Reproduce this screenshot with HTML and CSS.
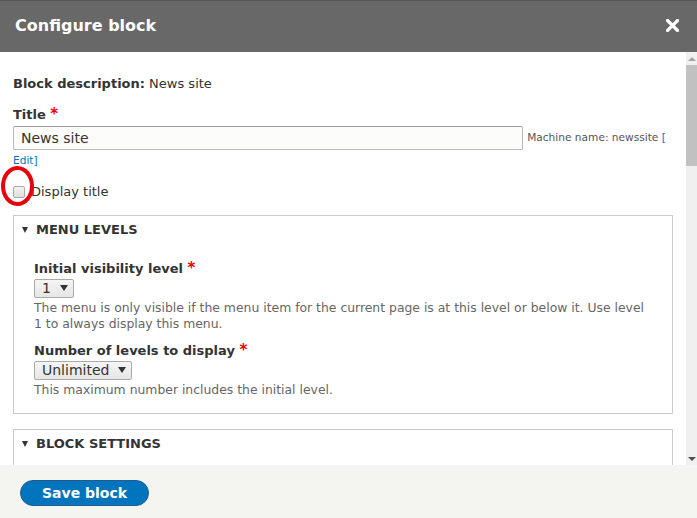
FILE: index.html
```html
<!DOCTYPE html>
<html lang="en">
<head>
    <meta charset="UTF-8">
    <meta name="viewport" content="width=device-width, initial-scale=1.0">
    <title>Configure block</title>
    <link rel="stylesheet" href="styles.css">
</head>
<body>
    <div class="dialog">
        <div class="titlebar">
            <span class="dialog-title">Configure block</span>
            <svg class="dialog-close" width="13" height="13" viewBox="0 0 13 13">
                <path d="M1.5 1.5 L11.5 11.5 M11.5 1.5 L1.5 11.5" stroke="#fff" stroke-width="3.2" stroke-linecap="square"/>
            </svg>
        </div>

        <div class="dialog-main">
            <form class="dialog-content">
                <div class="form-item">
                    <strong>Block description:</strong> News site
                </div>

                <div class="form-item title-item">
                    <label class="form-label">Title <span class="req">*</span></label>
                    <input type="text" class="form-text" value="News site"> <span class="machine-name"><span class="nowrap">Machine name: newssite <span class="admin-link">[</span></span><wbr><span class="admin-link"><a href="#">Edit</a>]</span></span>
                </div>

                <div class="form-item checkbox-item">
                    <input type="checkbox" id="displayTitle">
                    <label for="displayTitle">Display title</label>
                    <span class="annotation"></span>
                </div>

                <div class="details">
                    <div class="summary"><span class="summary-caret"></span>Menu levels</div>
                    <div class="details-body">
                        <div class="form-item">
                            <label class="form-label">Initial visibility level <span class="req">*</span></label>
                            <span class="select">1<span class="caret"></span></span>
                            <div class="description">The menu is only visible if the menu item for the current page is at this level or below it. Use level 1 to always display this menu.</div>
                        </div>
                        <div class="form-item">
                            <label class="form-label">Number of levels to display <span class="req">*</span></label>
                            <span class="select">Unlimited<span class="caret"></span></span>
                            <div class="description">This maximum number includes the initial level.</div>
                        </div>
                    </div>
                </div>

                <div class="details">
                    <div class="summary"><span class="summary-caret"></span>Block settings</div>
                    <div class="details-body">
                        <div class="form-item">
                            <label class="form-label">Region</label>
                        </div>
                    </div>
                </div>
            </form>

            <div class="scrollbar">
                <span class="arrow-up"></span>
                <span class="thumb"></span>
                <span class="track"></span>
                <span class="arrow-down"></span>
            </div>
        </div>

        <div class="button-pane">
            <button type="button" class="button-primary">Save block</button>
        </div>
    </div>
</body>
</html>
```

FILE: styles.css
```css
body {
    margin: 0;
    font-family: "DejaVu Sans", sans-serif;
    font-size: 13px;
    color: #333;
    background: #fff;
}
.dialog {
    display: flex;
    flex-direction: column;
    height: 518px;
    overflow: hidden;
}
.titlebar {
    height: 51px;
    flex: none;
    display: flex;
    align-items: center;
    justify-content: space-between;
    padding: 0 18px 0 15px;
    background: #686868;
    border-top: 1px solid #555;
    color: #fff;
}
.dialog-title {
    font-size: 16px;
    font-weight: bold;
    padding-bottom: 2px;
}
.dialog-close {
    margin-bottom: 2px;
}
.dialog-main {
    flex: 1;
    display: flex;
    min-height: 0;
}
.dialog-content {
    flex: 1;
    overflow: hidden;
    padding: 22px 13px 0 13px;
}
.form-item {
    margin-bottom: 10px;
    line-height: 20px;
}
.form-label {
    display: block;
    font-weight: bold;
}
.req {
    color: #e00;
    font-size: 15px;
}
.title-item {
    margin-bottom: 12px;
}
.form-text {
    width: 510px;
    height: 24px;
    box-sizing: border-box;
    margin: 1px 0 0 0;
    padding: 2px 7px;
    font-family: inherit;
    font-size: 14px;
    color: #333;
    background: #fcfcfa;
    border: 1px solid #b8b8b8;
    border-top-color: #999;
    border-radius: 2px;
    vertical-align: middle;
}
.machine-name {
    font-size: 10.6px;
    color: #555;
}
.nowrap {
    white-space: nowrap;
}
.admin-link, .admin-link a {
    color: #0074bd;
    text-decoration: none;
}
.checkbox-item {
    position: relative;
    display: flex;
    align-items: center;
    margin-bottom: 13px;
}
.checkbox-item input {
    appearance: none;
    width: 12px;
    height: 12px;
    margin: 0 6px 0 0;
    border: 1px solid #a8a8a8;
    border-radius: 2px;
    background: linear-gradient(#f3f3f3, #dedede);
}
.annotation {
    position: absolute;
    left: -12px;
    top: -16px;
    width: 25px;
    height: 32px;
    border: 4px solid #e8000b;
    border-radius: 50%;
}
.details {
    border: 1px solid #ccc;
    margin-bottom: 15px;
}
.summary {
    padding: 6px 7px;
    font-weight: bold;
    text-transform: uppercase;
    line-height: 16px;
}
.summary-caret {
    display: inline-block;
    width: 0;
    height: 0;
    margin: 0 8px 2px 1px;
    border-left: 3px solid transparent;
    border-right: 3px solid transparent;
    border-top: 6px solid #333;
    vertical-align: middle;
}
.details-body {
    padding: 14px 20px 7px 20px;
}
.details-body .form-item {
    margin-bottom: 8px;
}
.select {
    display: inline-block;
    height: 17px;
    line-height: 17px;
    padding: 0 5px 0 7px;
    font-size: 14px;
    border: 1px solid #aaa;
    border-radius: 2px;
    background: linear-gradient(#f5f5f5, #e6e6e6);
}
.caret {
    display: inline-block;
    width: 0;
    height: 0;
    margin: 0 0 2px 9px;
    border-left: 4px solid transparent;
    border-right: 4px solid transparent;
    border-top: 6px solid #333;
    vertical-align: middle;
}
.description {
    font-size: 12.4px;
    color: #666;
    line-height: 16px;
    margin-top: 1px;
}
.scrollbar {
    width: 11px;
    flex: none;
    display: flex;
    flex-direction: column;
    align-items: center;
    background: #f0f0f0;
}
.arrow-up, .arrow-down {
    width: 0;
    height: 0;
    margin: 5px 0 4px;
    border-left: 4px solid transparent;
    border-right: 4px solid transparent;
}
.arrow-up {
    border-bottom: 4px solid #a3a3a3;
}
.arrow-down {
    border-top: 4px solid #505050;
}
.thumb {
    width: 100%;
    height: 101px;
    background: #c1c1c1;
}
.track {
    flex: 1;
}
.button-pane {
    height: 53px;
    flex: none;
    display: flex;
    align-items: center;
    box-sizing: border-box;
    padding: 3px 20px 0 20px;
    background: #f4f4f1;
}
.button-primary {
    padding: 3px 21px;
    font-family: inherit;
    font-size: 14px;
    font-weight: bold;
    line-height: 18px;
    color: #fff;
    background: #0074bd;
    border: 1px solid #1e5c90;
    border-radius: 20px;
    cursor: pointer;
}
```
